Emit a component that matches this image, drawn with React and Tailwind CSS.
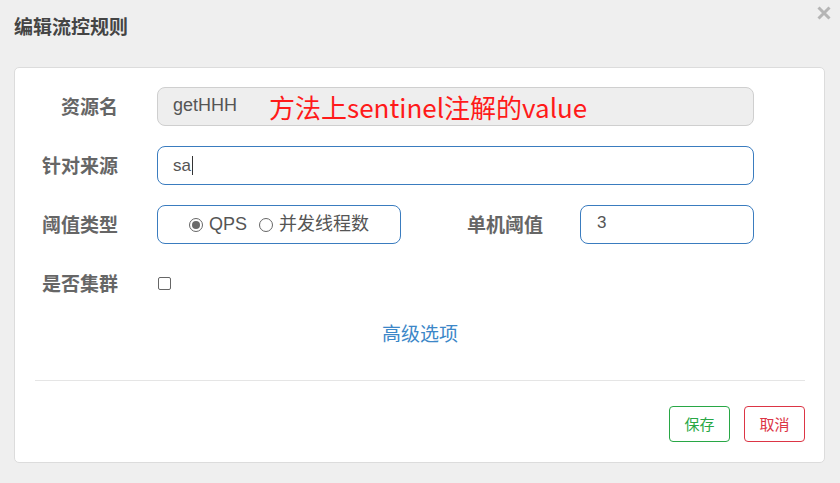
const labelCls =
  "w-[103px] shrink-0 text-right text-[19px] font-bold text-[#666] [font-family:'Noto_Sans_CJK_SC',sans-serif]"

const Radio = ({ checked, label }) => (
  <span className="flex items-center gap-[6px]">
    <span className="flex h-[14px] w-[14px] items-center justify-center rounded-full border border-[#666] bg-white">
      {checked && <span className="h-[8px] w-[8px] rounded-full bg-[#6a6a6a]" />}
    </span>
    <span className="text-[18px] text-[#555]">{label}</span>
  </span>
)

export default function App() {
  return (
    <div className="h-[483px] w-[840px] overflow-hidden bg-[#efefef] [font-family:'Liberation_Sans','Noto_Sans_CJK_SC',sans-serif]">
      <div className="relative flex h-[67px] items-start px-[14px] pt-[13px]">
        <h1 className="text-[19px] font-bold leading-[26px] text-[#444] [font-family:'Noto_Sans_CJK_SC',sans-serif]">
          编辑流控规则
        </h1>
        {/* close button */}
        <svg className="absolute right-[9px] top-[6px]" width="14" height="14" viewBox="0 0 14 14">
          <path d="M1.5 1.5 L12.5 12.5 M12.5 1.5 L1.5 12.5" stroke="#b5b5b5" strokeWidth="3" strokeLinecap="butt" />
        </svg>
      </div>

      <div className="mx-[14px] w-[811px] rounded-[5px] border border-[#dcdcdc] bg-white pl-[20px] pr-[19px] pt-[19px] pb-[20px]">
        <div className="flex flex-col gap-[20px]">
          <div className="flex h-[39px] items-center">
            <label className={`${labelCls} -ml-[20px]`}>资源名</label>
            <div className="ml-[39px] flex h-[39px] w-[597px] items-center rounded-[8px] border border-[#cfcfcf] bg-[#eeeeee] pl-[15px]">
              <span className="-mt-[3px] text-[18px] leading-none text-[#555]">getHHH</span>
              <span className="ml-[32px] text-[26px] leading-none text-[#ff1a1a] [font-family:'Noto_Sans_CJK_SC',sans-serif]">
                方法上sentinel注解的value
              </span>
            </div>
          </div>

          <div className="flex h-[39px] items-center">
            <label className={`${labelCls} -ml-[20px]`}>针对来源</label>
            <div className="ml-[39px] flex h-[39px] w-[597px] items-center rounded-[8px] border border-[#3a7cbf] bg-white pl-[15px]">
              <span className="text-[17px] text-[#555]">sa</span>
              <span className="ml-[1px] h-[19px] w-px bg-[#333]" />
            </div>
          </div>

          <div className="flex h-[39px] items-center">
            <label className={`${labelCls} -ml-[20px]`}>阈值类型</label>
            <div className="ml-[39px] flex h-[39px] w-[244px] items-center justify-center gap-[12px] rounded-[8px] border border-[#3a7cbf] bg-white">
              <Radio checked label="QPS" />
              <Radio label="并发线程数" />
            </div>
            <label className={`${labelCls} ml-[39px]`}>单机阈值</label>
            <div className="ml-[37px] flex h-[39px] w-[174px] items-center rounded-[8px] border border-[#3a7cbf] bg-white pl-[16px]">
              <span className="-mt-[3px] text-[17px] text-[#555]">3</span>
            </div>
          </div>

          <div className="flex h-[39px] items-center">
            <label className={`${labelCls} -ml-[20px]`}>是否集群</label>
            <span className="ml-[40px] mt-[-1px] h-[13px] w-[13px] rounded-[2px] border border-[#666] bg-white" />
          </div>
        </div>

        <div className="mt-[18px] text-center text-[19px] leading-[24px] text-[#3c87c8] [font-family:'Noto_Sans_CJK_SC',sans-serif]">
          高级选项
        </div>

        <div className="mt-[35px] border-t border-[#e5e5e5]" />

        <div className="mt-[25px] flex justify-end gap-[14px]">
          <button className="h-[36px] w-[61px] rounded-[4px] border border-[#28a745] bg-white text-[15px] text-[#28a745] [font-family:'Noto_Sans_CJK_SC',sans-serif]">
            保存
          </button>
          <button className="h-[36px] w-[61px] rounded-[4px] border border-[#dc3545] bg-white text-[15px] text-[#dc3545] [font-family:'Noto_Sans_CJK_SC',sans-serif]">
            取消
          </button>
        </div>
      </div>
    </div>
  )
}
